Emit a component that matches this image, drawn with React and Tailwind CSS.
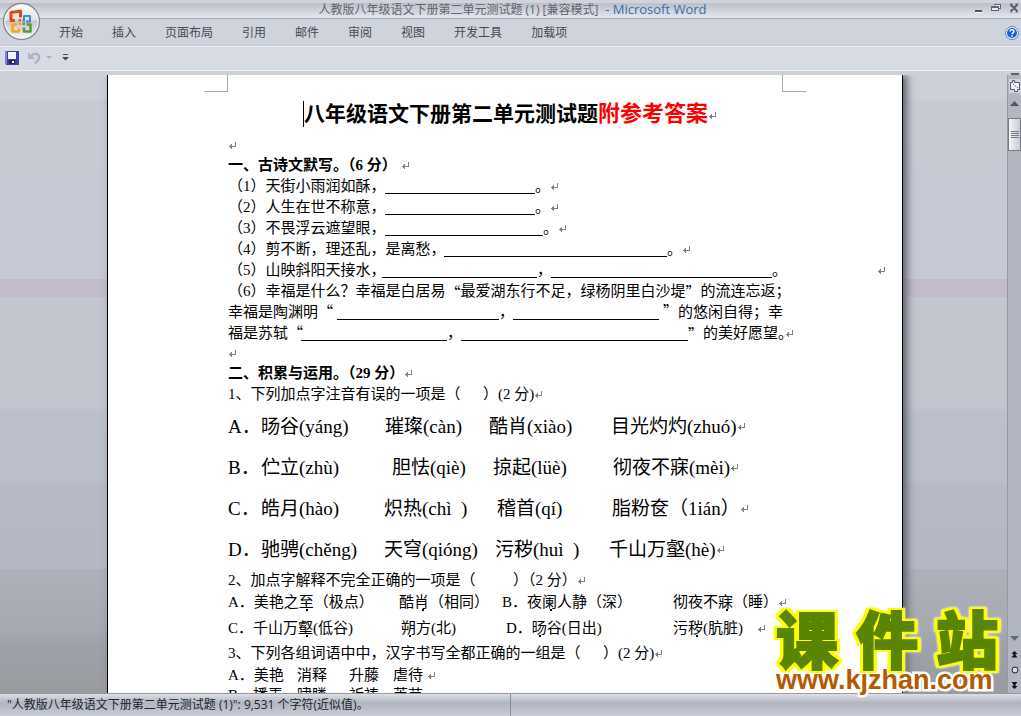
import React from 'react';
import clsx from 'clsx';

const tabs = ['开始', '插入', '页面布局', '引用', '邮件', '审阅', '视图', '开发工具', '加载项'];

function Mark({ className }) {
  return (
    <svg viewBox="0 0 8 8" className={clsx('w-2 h-2 shrink-0', className)} fill="none" stroke="#808080" shapeRendering="crispEdges">
      <path d="M7.5 0v4.5H1" />
      <path d="M3.5 2v5M2.5 3v3M1.5 4v1" />
    </svg>
  );
}

function Line({ className, children }) {
  return <p className={clsx('flex items-center whitespace-pre *:shrink-0', className || 'h-[21px]')}>{children}</p>;
}

function Blank({ className }) {
  return <span className={clsx('h-[15px] border-b border-black', className)} />;
}

// full-width quote
function Q({ children }) {
  return <span className="font-['Noto_Sans_CJK_SC',sans-serif] leading-none">{children}</span>;
}

// character with the emphasis dot under it
function Dot({ children }) {
  return (
    <span className="relative">
      {children}
      <span className="absolute -bottom-px left-1/2 w-0.5 h-0.5 bg-black" />
    </span>
  );
}

function OfficeButton() {
  return (
    <button type="button" aria-label="Office" className="absolute left-0.5 top-0.5 z-10 w-[39px] h-[39px]">
      <svg viewBox="0 0 39 39" className="w-full h-full">
        <defs>
          <linearGradient id="orb" x1="0" y1="0" x2="0" y2="1">
            <stop offset="0" stopColor="#fdfdfe" />
            <stop offset="0.45" stopColor="#dfe1e6" />
            <stop offset="0.5" stopColor="#c3c6cd" />
            <stop offset="1" stopColor="#fafafa" />
          </linearGradient>
        </defs>
        <circle cx="19.5" cy="19.5" r="18" fill="url(#orb)" stroke="#858992" strokeWidth="1.3" />
        <circle cx="19.5" cy="19.5" r="16.5" fill="none" stroke="#f6f7f9" strokeWidth="1" />
        <g fill="none" strokeLinejoin="round">
          <path d="M13 18.500H9V10.500L18.500 9v6.500" stroke="#dc4a12" strokeWidth="3" />
          <path d="M22 17V14h6v5.500h-4" stroke="#3d8fd0" strokeWidth="2" />
          <path d="M15 22.500h-4.500V29.500h6.500v-3" stroke="#f6a71c" strokeWidth="2.6" />
          <path d="M22 25.500v4h6.500V22.500h-4" stroke="#5b9c3a" strokeWidth="2.6" />
        </g>
        <rect x="16.5" y="17" width="2.5" height="2.5" fill="#e8641b" />
        <rect x="20.5" y="17" width="2.5" height="2.5" fill="#3d8fd0" />
        <rect x="16.5" y="20.5" width="2.5" height="2.5" fill="#f6a71c" />
        <rect x="20.5" y="20.5" width="2.5" height="2.5" fill="#5b9c3a" />
      </svg>
    </button>
  );
}

function TitleBar() {
  return (
    <header className="relative flex items-center justify-center h-[19px] shrink-0 pt-0.5 border-b border-[#a5a9b4] bg-linear-to-b from-[#d0d3db] from-15% via-[#bcc0ca] via-20% to-[#e4e7ed]">
      <h1 className="whitespace-pre text-[#5f6470] pl-1">
        人教版八年级语文下册第二单元测试题 (1) [兼容模式]<span className="text-[13px] text-[#3a6ca8]">  - Microsoft Word</span>
      </h1>
      <div className="absolute right-0.5 top-0.5 flex gap-2">
        <button type="button" aria-label="最小化">
          <svg viewBox="0 0 10 12" className="w-2.5 h-3" shapeRendering="crispEdges">
            <path d="M2 8h7v2H2z" fill="#4c515c" />
            <path d="M2 10h7v1H2z" fill="#fff" />
          </svg>
        </button>
        <button type="button" aria-label="还原">
          <svg viewBox="0 0 10 12" className="w-2.5 h-3" fill="none" stroke="#5b6478" shapeRendering="crispEdges">
            <path d="M3.5 2.5h6v4h-2M3 2.5h7M.5 5v3.500h7V5z" fill="#e8ebf0" />
            <path d="M0 4.5h8" strokeWidth="2" />
          </svg>
        </button>
        <button type="button" aria-label="关闭">
          <svg viewBox="0 0 10 12" className="w-2.5 h-3" stroke="#5b6478" strokeWidth="2.2">
            <path d="M1.5 2.5l7 7M8.5 2.5l-7 7M1 2.5h2.5M6.500 2.500H9M1 9.500h2.500M6.500 9.500H9" />
          </svg>
        </button>
      </div>
    </header>
  );
}

function Ribbon() {
  return (
    <nav className="flex items-center gap-[29px] h-[27px] shrink-0 pt-0.5 pl-[59px] pr-0.5 border-b border-[#c3c7d0] bg-[#cfd3dc] text-[#454a56]">
      {tabs.map((tab) => (
        <button key={tab} type="button">{tab}</button>
      ))}
      <button type="button" aria-label="帮助" className="ml-auto">
        <svg viewBox="0 0 14 14" className="w-3.5 h-3.5">
          <circle cx="7" cy="7" r="6.5" fill="#eef4fb" stroke="#5f86b8" />
          <circle cx="7" cy="7" r="5" fill="#1d5fd6" />
          <path d="M5 5.5c0-2.4 4-2.4 4 0C9 7 7 6.700 7 8.300M7 9.300v1.400" fill="none" stroke="#fff" strokeWidth="1.4" />
        </svg>
      </button>
    </nav>
  );
}

function QuickAccess() {
  return (
    <div className="flex items-center h-[25px] shrink-0 pb-0.5 pl-[5px] border-y border-[#eef0f4] bg-[#d7dbe4]">
      <button type="button" aria-label="保存">
        <svg viewBox="0 0 14 14" className="w-3.5 h-3.5" shapeRendering="crispEdges">
          <path d="M0 0h14v14H1L0 13z" fill="#3b41a8" />
          <path d="M0 0h2v13H0z" fill="#7b82d8" />
          <path d="M3 1h8v7H3z" fill="#f4f6fc" />
          <path d="M4 9h6v4H4z" fill="#20254f" />
          <path d="M7 10h2v2H7z" fill="#fff" />
        </svg>
      </button>
      <button type="button" aria-label="撤消" className="ml-2">
        <svg viewBox="0 0 14 14" className="w-3.5 h-3.5" fill="none" stroke="#b0b4c0" strokeWidth="2.4">
          <path d="M4 5.500c3-4.500 8.500-3 8 1 0 2-1.500 4-4.500 5.500" />
          <path d="M1 1v7h7z" fill="#b0b4c0" stroke="none" />
        </svg>
      </button>
      <button type="button" aria-label="撤消选项" className="ml-1">
        <svg viewBox="0 0 7 4" className="w-[7px] h-1"><path d="M1 0h6L4 3z" fill="#a9adb8" /></svg>
      </button>
      <button type="button" aria-label="自定义快速访问工具栏" className="ml-2.5">
        <svg viewBox="0 0 7 7" className="w-[7px] h-[7px]"><path d="M1 0h5v1H1zM0 3h7L3.5 6.5z" fill="#454a56" /></svg>
      </button>
    </div>
  );
}

function Scrollbar() {
  return (
    <aside className="flex flex-col items-center w-3.5 shrink-0 border-l border-[#9599a4] bg-[#b2b6c0]">
      <span className="w-2 h-0.5 mt-[-2px] bg-[#5d616b]" />
      <button type="button" aria-label="标尺" className="mt-1 w-3 h-3.5 bg-[#d0d4dd]">
        <svg viewBox="0 0 12 14" className="w-3 h-3.5" fill="#f4f4f8" stroke="#4d5872">
          <path d="M1.5 3.5h2v-2h2v2h5v7h-2v2h-3v-2h-4z" />
          <path d="M4 5l5 4" strokeDasharray="1.5 1" />
        </svg>
      </button>
      <button type="button" aria-label="向上滚动" className="flex mt-2">
        <svg viewBox="0 0 9 5" className="w-[9px] h-[5px]"><path d="M0 5h9L4.5 0z" fill="#4d5465" /></svg>
      </button>
      <div className="flex flex-col items-center justify-center gap-px mt-3 w-full h-[33px] border border-[#777b86] bg-linear-to-r from-[#f6f6f4] to-[#c5cbd8]">
        <span className="w-2 h-px bg-[#777b86]" />
        <span className="w-2 h-px bg-[#777b86]" />
        <span className="w-2 h-px bg-[#777b86]" />
        <span className="w-2 h-px bg-[#777b86]" />
      </div>
      <button type="button" aria-label="向下滚动" className="mt-auto mb-2.5">
        <svg viewBox="0 0 9 5" className="w-[9px] h-[5px]"><path d="M0 0h9L4.5 5z" fill="#5b6b86" /></svg>
      </button>
      <div className="flex flex-col items-center gap-2 pb-1">
        <svg viewBox="0 0 7 7" className="w-[7px] h-[7px]"><path d="M3.5 0L6.5 3H4.500V4L6.500 6.500H0.500L2.500 4V3H.5z" fill="#111" /></svg>
        <svg viewBox="0 0 8 8" className="w-2 h-2"><circle cx="4" cy="4" r="3" fill="#d9dbe0" stroke="#222" /></svg>
        <svg viewBox="0 0 7 7" className="w-[7px] h-[7px]"><path d="M.5 0h6L4.500 2.500V4h2L3.500 7 .5 4h2V2.500z" fill="#111" /></svg>
      </div>
    </aside>
  );
}

function Page() {
  return (
    <article className="w-[796px] shrink-0 h-full overflow-hidden px-[120px] border-x border-black bg-white text-black text-[15px] shadow-[4px_0_8px_#5b5f6a] font-['Liberation_Serif','Noto_Sans_CJK_SC',serif]">
      <div className="flex justify-between -mx-6 h-[17px]">
        <span className="w-6 border-r border-b border-[#a9abb4]" />
        <span className="w-6 border-l border-b border-[#a9abb4]" />
      </div>
      <h2 className="flex items-center h-11 pl-[75px] text-[21px] font-bold whitespace-pre">
        <span className="w-px h-[26px] bg-black" />
        八年级语文下册第二单元测试题<span className="text-[22px] text-[#ff0000]">附参考答案</span>
        <Mark className="mt-1" />
      </h2>
      <Line className="h-5"><Mark /></Line>
      <Line className="h-5 font-bold">一、古诗文默写。（6 分）<Mark className="ml-1" /></Line>
      <Line><span className="w-[157px]">（1）天街小雨润如酥，</span><Blank className="w-[150px]" />。<Mark /></Line>
      <Line><span className="w-[157px]">（2）人生在世不称意，</span><Blank className="w-[150px]" />。<Mark /></Line>
      <Line><span className="w-[157px]">（3）不畏浮云遮望眼，</span><Blank className="w-[158px]" />。<Mark /></Line>
      <Line><span className="w-[216px]">（4）剪不断，理还乱，是离愁，</span><Blank className="w-[223px]" />。<Mark /></Line>
      <Line><span className="w-[154px]">（5）山映斜阳天接水，</span><Blank className="w-[155px]" /><span className="w-3.5">，</span><Blank className="w-[221px]" />。<Mark className="ml-[90px]" /></Line>
      <Line>（6）幸福是什么？幸福是白居易<Q>“</Q>最爱湖东行不足，绿杨阴里白沙堤<Q>”</Q>的流连忘返；</Line>
      <Line><span className="w-[109px]">幸福是陶渊明<Q>“</Q></span><Blank className="w-[162px]" /><span className="w-3.5">，</span><Blank className="w-[146px]" /><span className="ml-1"><Q>”</Q>的悠闲自得；幸</span></Line>
      <Line><span className="w-[73px]">福是苏轼<Q>“</Q></span><Blank className="w-[146px]" /><span className="w-3.5">，</span><Blank className="w-[227px]" /><Q>”</Q>的美好愿望。<Mark className="-ml-2" /></Line>
      <Line className="h-5"><Mark /></Line>
      <Line className="h-5 font-bold">二、积累与运用。（29 分）<Mark /></Line>
      <Line className="h-[22px]">1、下列加点字注音有误的一项是（      ）(2 分)<Mark /></Line>

      <div className="text-[19px] leading-[41px] whitespace-pre">
        <div className="grid grid-cols-[33px_124px_104px_122px_auto]">
          <span>A．</span><span>旸谷(yáng)</span><span>璀璨(càn)</span><span>酷肖(xiào)</span>
          <span className="flex items-center">目光灼灼(zhuó)<Mark /></span>
        </div>
        <div className="grid grid-cols-[33px_131px_101px_120px_auto]">
          <span>B．</span><span>伫立(zhù)</span><span>胆怯(qiè)</span><span>掠起(lüè)</span>
          <span className="flex items-center">彻夜不寐(mèi)<Mark /></span>
        </div>
        <div className="grid grid-cols-[33px_123px_113px_115px_auto]">
          <span>C．</span><span>皓月(hào)</span><span>炽热(chì  )</span><span>稽首(qí)</span>
          <span className="flex items-center">脂粉奁（1ián）<Mark /></span>
        </div>
        <div className="grid grid-cols-[33px_123px_111px_114px_auto]">
          <span>D．</span><span>驰骋(chěng)</span><span>天穹(qióng)</span><span>污秽(huì  )</span>
          <span className="flex items-center">千山万壑(hè)<Mark /></span>
        </div>
      </div>

      <Line className="h-[22px]">2、加点字解释不完全正确的一项是（          ）（2 分）<Mark /></Line>
      <Line className="h-[22px]">
        <span className="w-[171px]">A．美艳之<Dot>至</Dot>（极点）</span>
        <span className="w-[103px]">酷<Dot>肖</Dot>（相同）</span>
        <span className="w-[171px]">B．夜<Dot>阑</Dot>人静（深）</span>
        <span>彻夜不<Dot>寐</Dot>（睡）</span><Mark />
      </Line>
      <Line className="h-[29px]">
        <span className="w-[173px]">C．千山万<Dot>壑</Dot>(低谷)</span>
        <span className="w-[105px]"><Dot>朔</Dot>方(北)</span>
        <span className="w-[167px]">D．<Dot>旸</Dot>谷(日出)</span>
        <span>污<Dot>秽</Dot>(肮脏)</span><Mark className="ml-3.5" />
      </Line>
      <Line className="h-[22px]">3、下列各组词语中中，汉字书写全都正确的一组是（      ）(2 分)<Mark /></Line>
      <Line><span className="w-[69px]">A．美艳</span><span className="w-[52px]">消释</span><span className="w-11">升藤</span>虐待<Mark className="ml-1" /></Line>
      <Line className="h-5"><span className="w-[69px]">B．播弄</span><span className="w-[52px]">啸瞵</span><span className="w-11">祈祷</span>莱芜</Line>
    </article>
  );
}

function Watermark() {
  return (
    <div className="absolute left-[776px] top-[612px] z-20 w-[222px] font-bold">
      <div className="flex justify-between text-[62px] leading-[56px] font-black text-[#5a8500] [-webkit-text-stroke:2px_#5a8500] [filter:drop-shadow(3px_0_0_#ff0)_drop-shadow(-3px_0_0_#ff0)_drop-shadow(0_2px_0_#ff0)_drop-shadow(0_-2px_0_#ff0)_drop-shadow(0_0_1px_#fff)]">
        <span>课</span><span>件</span><span>站</span>
      </div>
      <a href="#" className="block text-[27px] leading-6 text-[#b35a00] [-webkit-text-stroke:5px_#fff] [paint-order:stroke_fill] font-['Liberation_Sans',sans-serif]">
        www.kjzhan.com
      </a>
    </div>
  );
}

export default function App() {
  return (
    <div className="relative flex flex-col h-screen overflow-hidden bg-[#cdd0d6] text-xs font-['Open_Sans','Noto_Sans_CJK_SC',sans-serif]">
      <OfficeButton />
      <TitleBar />
      <Ribbon />
      <QuickAccess />
      <main className="flex flex-1 min-h-0 mt-1">
        <div className="flex flex-1 justify-center min-w-0 overflow-hidden pl-[3px] bg-[linear-gradient(#cdd0d9_4%,#c8cbd4_4%,#c6c9d3_33%,#c0bccc_33%,#c0bccc_36%,#c3c5cf_36%,#c2c4ce_54%,#bcc0ca_54%,#bbbfc9_66%,#b7bac4_66%,#b5b8c2_80%,#aeb1ba_80%,#a6a9b2_90%,#9fa1a8_92%,#999ba1)]">
          <Page />
        </div>
        <Scrollbar />
      </main>
      <footer className="flex items-center h-[23px] shrink-0 border-t border-[#96999f] bg-linear-to-b from-[#dde0e7] via-[#b1b5c0] via-40% to-[#c9cdd7] text-[#22252c]">
        <p className="w-1/2 h-full pl-[7px] leading-[21px] border-r border-[#8b8f99]">"人教版八年级语文下册第二单元测试题 (1)": 9,531 个字符(近似值)。</p>
      </footer>
      <Watermark />
    </div>
  );
}
